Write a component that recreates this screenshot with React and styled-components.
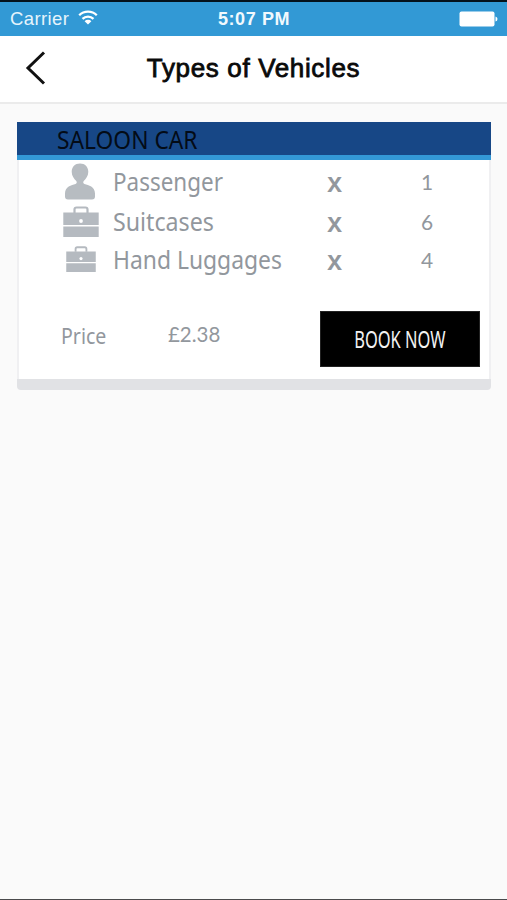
import React from "react";
import styled, { createGlobalStyle } from "styled-components";

const GlobalStyle = createGlobalStyle`
    * {
        box-sizing: border-box;
    }
    body {
        margin: 0;
        background: #fafafa;
        font-family: "Noto Sans", "Open Sans", sans-serif;
    }
`;

const Screen = styled.div`
    display: flex;
    flex-direction: column;
    height: 900px;
    border-top: 2px solid #04121c;
    border-bottom: 1px solid #4a4a4c;
    background: #fafafa;
`;

const StatusBar = styled.header`
    display: grid;
    grid-template-columns: 1fr auto 1fr;
    align-items: center;
    height: 34px;
    padding: 0 9px 0 10px;
    background: #3299d5;
    color: #fff;
    font-family: "Liberation Sans", Arial, sans-serif;
`;

const Carrier = styled.div`
    display: flex;
    align-items: center;
    gap: 9px;
    font-size: 18.5px;
    letter-spacing: 0.4px;
    line-height: 32px;
    color: #e6f4fc;

    svg {
        margin-bottom: 3px;
    }
`;

const Clock = styled.div`
    font-size: 18px;
    font-weight: bold;
    letter-spacing: 0.6px;
    line-height: 32px;
    padding-bottom: 1px;
    color: #f1f9fe;
`;

const Battery = styled.svg`
    justify-self: end;
`;

const NavBar = styled.nav`
    display: grid;
    grid-template-columns: 1fr auto 1fr;
    align-items: center;
    height: 68px;
    padding: 0 25px 2px;
    background: #fff;
    border-bottom: 2px solid #ebebeb;
`;

const BackButton = styled.button`
    display: flex;
    padding: 0;
    border: 0;
    background: none;
`;

const Title = styled.h1`
    margin: 0;
    font-family: "Liberation Sans", Arial, sans-serif;
    font-size: 26px;
    font-weight: normal;
    letter-spacing: 0.65px;
    line-height: 64px;
    color: #0a0a0a;
    -webkit-text-stroke: 0.8px #0a0a0a;
`;

const Card = styled.section`
    display: flex;
    flex-direction: column;
    height: 268px;
    margin: 18px 16px 0 17px;
    border-bottom: 11px solid #e1e2e5;
    border-radius: 0 0 4px 4px;
`;

const CardHeader = styled.div`
    height: 38px;
    padding: 1px 0 0 40px;
    background: #174786;
    border-bottom: 5px solid #3398d6;
`;

const CardBody = styled.div`
    flex: 1;
    background: #fff;
    border: solid #f0f0f2;
    border-width: 0 2px;
`;

// condensed text, squeezed from its left edge
const Text = styled.span`
    display: inline-block;
    white-space: nowrap;
    font-family: ${(props) => props.$family || "inherit"};
    font-size: ${(props) => props.$size}px;
    font-weight: ${(props) => props.$weight || 400};
    line-height: 34px;
    color: ${(props) => props.$color || "#92979d"};
    transform: scaleX(${(props) => props.$squeeze || 1});
    transform-origin: ${(props) => props.$origin || "left"} center;
`;

const Row = styled.div`
    display: grid;
    grid-template-columns: 36px 202px 67px 1fr;
    align-items: center;
    height: ${(props) => props.$height}px;
    padding-left: 44px;
`;

const IconCell = styled.div`
    display: flex;
    justify-content: center;

    svg {
        flex: none;
    }
`;

const Label = styled.div`
    display: flex;
    padding: 0 0 1px 14px;
`;

const Times = styled.div`
    display: flex;
    justify-content: center;
    padding-top: 3px;
`;

const Count = styled.div`
    display: flex;
    padding: 1px 0 0 53px;
`;

const CardFooter = styled.div`
    display: grid;
    grid-template-columns: 107px 1fr 160px;
    padding: 33px 9px 0 42px;
`;

const PriceLabel = styled.div`
    padding-top: 8px;
`;

const PriceValue = styled.div`
    padding-top: 6px;
`;

const BookButton = styled.button`
    display: flex;
    align-items: center;
    justify-content: center;
    height: 56px;
    padding: 0;
    border: 1px solid #222;
    background: #000;
    font-family: inherit;
`;

function WifiIcon() {
    return (
        <svg width="20" height="15" viewBox="0 0 20 15" fill="none" stroke="#fff">
            <path d="M1.2 5.2a12.6 12.6 0 0 1 17.6 0" strokeWidth="2.3" />
            <path d="M4.5 8.8a8 8 0 0 1 11 0" strokeWidth="2.3" />
            <path d="M6.6 11.2a4.8 4.8 0 0 1 6.8 0L10 14.6z" fill="#fff" stroke="none" />
        </svg>
    );
}

function PersonIcon() {
    return (
        <svg width="32" height="38" viewBox="0 0 32 38" fill="#b7bcc1">
            <path d="M15 1.500c5 0 8.300 3.300 8.300 8.300 0 4.200-2.300 7-4.600 9.200-.9 1.200-.4 2.600.8 3.100 4 .9 10.500 2.900 10.500 9.400v3q0 3-3 3H3q-3 0-3-3v-3c0-6.500 6.500-8.500 10.500-9.400 1.200-.5 1.700-1.900.8-3.100C9 16.800 6.700 14 6.700 9.800c0-5 3.300-8.300 8.300-8.300z" />
        </svg>
    );
}

function CaseIcon({ width, height }) {
    return (
        <svg width={width} height={height} viewBox="0 0 36 31" preserveAspectRatio="none">
            <path d="M11.5 7V3.500q0-2 2-2h9q2 0 2 2V7" fill="none" stroke="#b5bac0" strokeWidth="2.200" />
            <path d="M.3 6.500h35.400v12.500H.3zM.3 20.500h35.400V31H.3z" fill="#b5bac0" />
            <circle cx="18" cy="15" r="1.900" fill="#fff" />
        </svg>
    );
}

const capacity = [
    { label: "Passenger", count: 1, height: 42, squeeze: 0.88, icon: <PersonIcon /> },
    { label: "Suitcases", count: 6, height: 38, squeeze: 0.91, icon: <CaseIcon width={36} height={31} /> },
    { label: "Hand Luggages", count: 4, height: 38, squeeze: 0.897, icon: <CaseIcon width={30} height={26} /> },
];

export default function App() {
    return (
        <Screen>
            <GlobalStyle />
            <StatusBar>
                <Carrier>
                    Carrier
                    <WifiIcon />
                </Carrier>
                <Clock>5:07 PM</Clock>
                <Battery width="39" height="16" viewBox="0 0 39 16" fill="#fff">
                    <rect x="0.5" y="0.5" width="35" height="15" rx="2" />
                    <path d="M36.5 5.500q2 .5 2 2.500t-2 2.500z" />
                </Battery>
            </StatusBar>
            <NavBar>
                <BackButton aria-label="Back">
                    <svg width="21" height="34" viewBox="0 0 21 34" fill="none" stroke="#111" strokeWidth="3">
                        <path d="M19 1.500 3 17l16 15.500" />
                    </svg>
                </BackButton>
                <Title>Types of Vehicles</Title>
            </NavBar>
            <Card>
                <CardHeader>
                    <Text $size={24.5} $squeeze={0.93} $color="#030b16">SALOON CAR</Text>
                </CardHeader>
                <CardBody>
                    {capacity.map((item) => (
                        <Row key={item.label} $height={item.height}>
                            <IconCell>{item.icon}</IconCell>
                            <Label>
                                <Text $size={25.5} $squeeze={item.squeeze}>{item.label}</Text>
                            </Label>
                            <Times>
                                <Text $size={22} $weight={700} $origin="center">X</Text>
                            </Times>
                            <Count>
                                <Text $size={22} $family="Lato, sans-serif" $squeeze={0.95}>{item.count}</Text>
                            </Count>
                        </Row>
                    ))}
                    <CardFooter>
                        <PriceLabel>
                            <Text $size={21.5} $squeeze={0.91}>Price</Text>
                        </PriceLabel>
                        <PriceValue>
                            <Text $size={22} $family="Lato, sans-serif" $squeeze={0.93}>£2.38</Text>
                        </PriceValue>
                        <BookButton>
                            <Text $size={23} $squeeze={0.715} $origin="center" $color="#f2f2f2">BOOK NOW</Text>
                        </BookButton>
                    </CardFooter>
                </CardBody>
            </Card>
        </Screen>
    );
}
